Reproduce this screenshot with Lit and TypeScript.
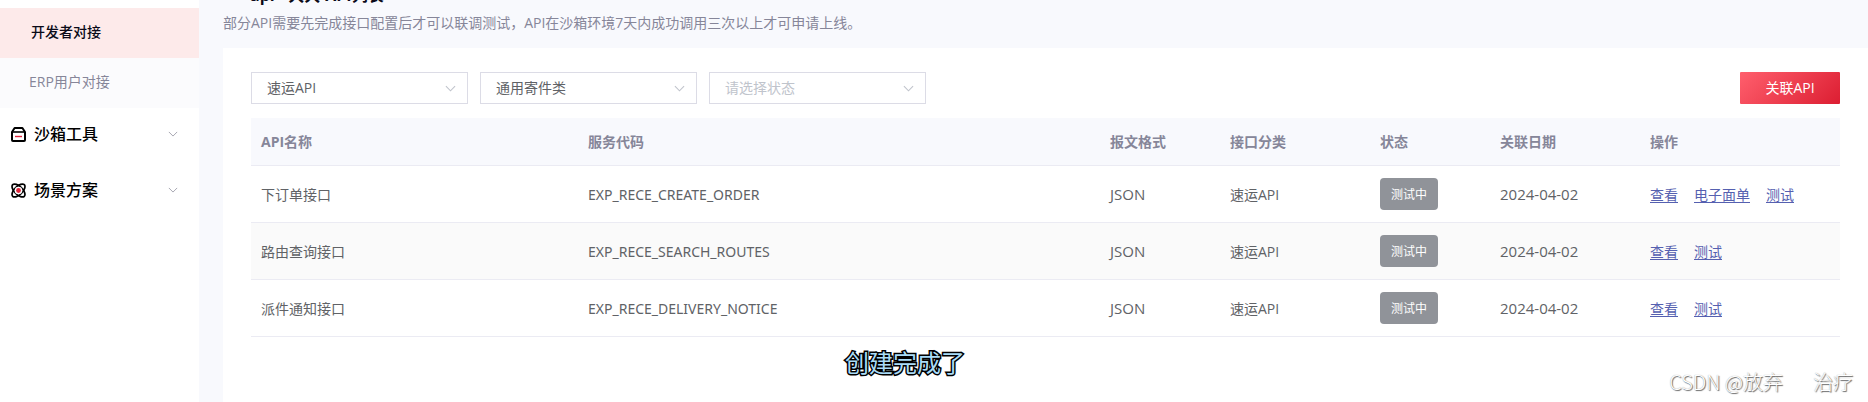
import { LitElement, html, css, svg } from "lit";
import { customElement } from "lit/decorators.js";

interface ApiRow {
  name: string;
  code: string;
  format: string;
  category: string;
  status: string;
  date: string;
  actions: string[];
}

const ROWS: ApiRow[] = [
  { name: "下订单接口", code: "EXP_RECE_CREATE_ORDER", format: "JSON", category: "速运API", status: "测试中", date: "2024-04-02", actions: ["查看", "电子面单", "测试"] },
  { name: "路由查询接口", code: "EXP_RECE_SEARCH_ROUTES", format: "JSON", category: "速运API", status: "测试中", date: "2024-04-02", actions: ["查看", "测试"] },
  { name: "派件通知接口", code: "EXP_RECE_DELIVERY_NOTICE", format: "JSON", category: "速运API", status: "测试中", date: "2024-04-02", actions: ["查看", "测试"] },
];

const FILTERS = [
  { label: "接口分类", value: "速运API", empty: false },
  { label: "接口类型", value: "通用寄件类", empty: false },
  { label: "状态", value: "请选择状态", empty: true },
];

const HEADS = ["API名称", "服务代码", "报文格式", "接口分类", "状态", "关联日期", "操作"];

const chevron = svg`<path d="M1 1 L6 6 L11 1" fill="none" stroke="currentColor" stroke-width="1.2"/>`;

const boxIcon = html`<svg class="icon" viewBox="0 0 15 15" aria-hidden="true">
  <path d="M3.6 1 H11.4 L14 5 V13 Q14 14 13 14 H2 Q1 14 1 13 V5 Z" fill="none" stroke="#000" stroke-width="2" stroke-linejoin="round"/>
  <path d="M1 5 H14" stroke="#000" stroke-width="1.6"/>
  <path d="M4 9.5 H11" stroke="#e0263c" stroke-width="1.4"/>
</svg>`;

const atomIcon = html`<svg class="icon" viewBox="0 0 15 15" aria-hidden="true">
  <g fill="none" stroke="#000" stroke-width="1.7">
    <ellipse cx="7.5" cy="7.5" rx="8.2" ry="4" transform="rotate(45 7.5 7.5)"/>
    <ellipse cx="7.5" cy="7.5" rx="8.2" ry="4" transform="rotate(-45 7.5 7.5)"/>
  </g>
  <circle cx="7.5" cy="7.5" r="3.8" fill="#fff"/>
  <circle cx="7.5" cy="7.5" r="2.4" fill="#e0263c"/>
</svg>`;

@customElement("side-menu")
export class SideMenu extends LitElement {
  static styles = css`
    :host { display: block; background: #fff; padding-top: 8px; }
    .sub { display: flex; align-items: center; height: 50px; box-sizing: border-box; padding: 0 29px 4px; font-size: 14px; color: #868699; background: #fbfbfd; text-decoration: none; }
    .sub.active { padding: 0 31px 4px; color: #0a0a18; background: #fdeaea; font-weight: 500; }
    .group { display: flex; align-items: center; width: 100%; height: 56px; padding: 0 21px 4px 11px; gap: 8px; border: 0; background: none; font-family: inherit; font-size: 16px; font-weight: 500; color: #000; text-align: left; }
    .label { flex: 1; padding-bottom: 2px; }
    .icon { width: 15px; height: 15px; }
    .chev { width: 10px; height: 6px; color: #a8a8b3; }
  `;
  render() {
    const group = (icon: unknown, label: string) => html`<button class="group" type="button">
      ${icon}<span class="label">${label}</span>
      <svg class="chev" viewBox="0 0 12 7" aria-hidden="true">${chevron}</svg>
    </button>`;
    return html`<nav>
      <a class="sub active" href="#developer">开发者对接</a>
      <a class="sub" href="#erp">ERP用户对接</a>
      ${group(boxIcon, "沙箱工具")} ${group(atomIcon, "场景方案")}
    </nav>`;
  }
}

@customElement("filter-bar")
export class FilterBar extends LitElement {
  static styles = css`
    :host { display: flex; align-items: center; gap: 12px; }
    .field { display: grid; width: 217px; height: 32px; align-items: center; }
    .field > * { grid-area: 1 / 1; }
    select { appearance: none; width: 100%; height: 32px; border: 1px solid #dcdce6; border-radius: 0; background: #fff; padding: 0 30px 2px 15px; font-family: inherit; font-size: 14px; color: #606266; }
    .empty { color: #c0c4cc; }
    .chev { justify-self: end; width: 11px; height: 7px; margin-right: 12px; color: #c0c4cc; pointer-events: none; }
    .add { margin-left: auto; width: 100px; height: 32px; padding: 0 0 2px; border: 0; border-radius: 1px; color: #fff; font-family: inherit; font-size: 14px; background: linear-gradient(135deg, #ff5f6d 0%, #dc1e32 100%); }
  `;
  render() {
    return html`${FILTERS.map(
        (f) => html`<label class="field">
          <select class=${f.empty ? "empty" : ""} aria-label=${f.label}><option>${f.value}</option></select>
          <svg class="chev" viewBox="0 0 12 7" aria-hidden="true">${chevron}</svg>
        </label>`
      )}
      <button class="add" type="button">关联API</button>`;
  }
}

@customElement("api-table")
export class ApiTable extends LitElement {
  static styles = css`
    :host { display: block; }
    table { width: 100%; table-layout: fixed; border-collapse: separate; border-spacing: 0; font-size: 14px; line-height: 24px; color: #606266; }
    th, td { box-sizing: border-box; padding: 0 10px; text-align: left; border-bottom: 1px solid #ebebf3; white-space: nowrap; }
    th { height: 48px; background: #f8f9fd; color: #868699; font-weight: 700; }
    td { height: 57px; padding-top: 1px; }
    td.state { padding-top: 0; }
    td.code { font-family: "Noto Sans", sans-serif; }
    td.latin { font-size: 15px; padding-top: 0; }
    tbody tr:nth-child(even) { background: #fafafa; }
    .c-name { width: 327px; }
    .c-s { width: 120px; }
    .c-m { width: 150px; }
    .c-l { width: 200px; }
    .tag { display: inline-block; vertical-align: middle; height: 32px; line-height: 33px; padding: 0 11px; border-radius: 4px; background: #909399; color: #fff; font-size: 12px; }
    .links { display: flex; gap: 16px; }
    .links a { color: #5560b0; text-underline-offset: 2px; }
  `;
  render() {
    return html`<table>
      <colgroup><col class="c-name" /><col /><col class="c-s" /><col class="c-m" /><col class="c-s" /><col class="c-m" /><col class="c-l" /></colgroup>
      <thead><tr>${HEADS.map((h) => html`<th scope="col">${h}</th>`)}</tr></thead>
      <tbody>
        ${ROWS.map(
          (r) => html`<tr>
            <td>${r.name}</td><td class="code">${r.code}</td><td class="latin">${r.format}</td><td>${r.category}</td>
            <td class="state"><span class="tag">${r.status}</span></td><td class="latin">${r.date}</td>
            <td><div class="links">${r.actions.map((a) => html`<a href="#action">${a}</a>`)}</div></td>
          </tr>`
        )}
      </tbody>
    </table>`;
  }
}

@customElement("app-root")
export class AppRoot extends LitElement {
  static styles = css`
    :host { display: grid; grid-template-columns: 199px minmax(0, 1fr); position: relative; height: 100vh; overflow: hidden; background: #f8f9fd; font-family: "Open Sans", "Noto Sans CJK SC", sans-serif; }
    .main { display: flex; flex-direction: column; padding-left: 24px; min-width: 0; }
    .title { margin: -17px 0 0 27px; font-size: 16px; line-height: 24px; font-weight: 700; color: #0a0a18; }
    .hint { margin: 5px 0 14px; font-size: 14px; line-height: 22px; color: #868699; }
    .panel { flex: 1; background: #fff; padding: 24px 28px; }
    .table { margin-top: 14px; }
    .caption { position: absolute; left: 0; right: 58px; bottom: 22px; margin: 0; text-align: center; font-size: 24px; line-height: 34px; color: #a9dcf8; -webkit-text-stroke: 3px #000; paint-order: stroke fill; pointer-events: none; }
    .mark { position: absolute; right: 15px; bottom: 6px; margin: 0; display: flex; gap: 30px; font-family: "Noto Sans CJK SC", sans-serif; font-weight: 300; font-size: 20px; line-height: 28px; color: #fff; text-shadow: 1px 1px 1px #666, 0 0 1px #999; pointer-events: none; }
  `;
  render() {
    return html`<side-menu></side-menu>
      <main class="main">
        <h1 class="title">api - 大大-API列表</h1>
        <p class="hint">部分API需要先完成接口配置后才可以联调测试，API在沙箱环境7天内成功调用三次以上才可申请上线。</p>
        <section class="panel">
          <filter-bar></filter-bar>
          <api-table class="table"></api-table>
        </section>
      </main>
      <p class="caption">创建完成了</p>
      <p class="mark"><span>CSDN @放弃</span><span>治疗</span></p>`;
  }
}
